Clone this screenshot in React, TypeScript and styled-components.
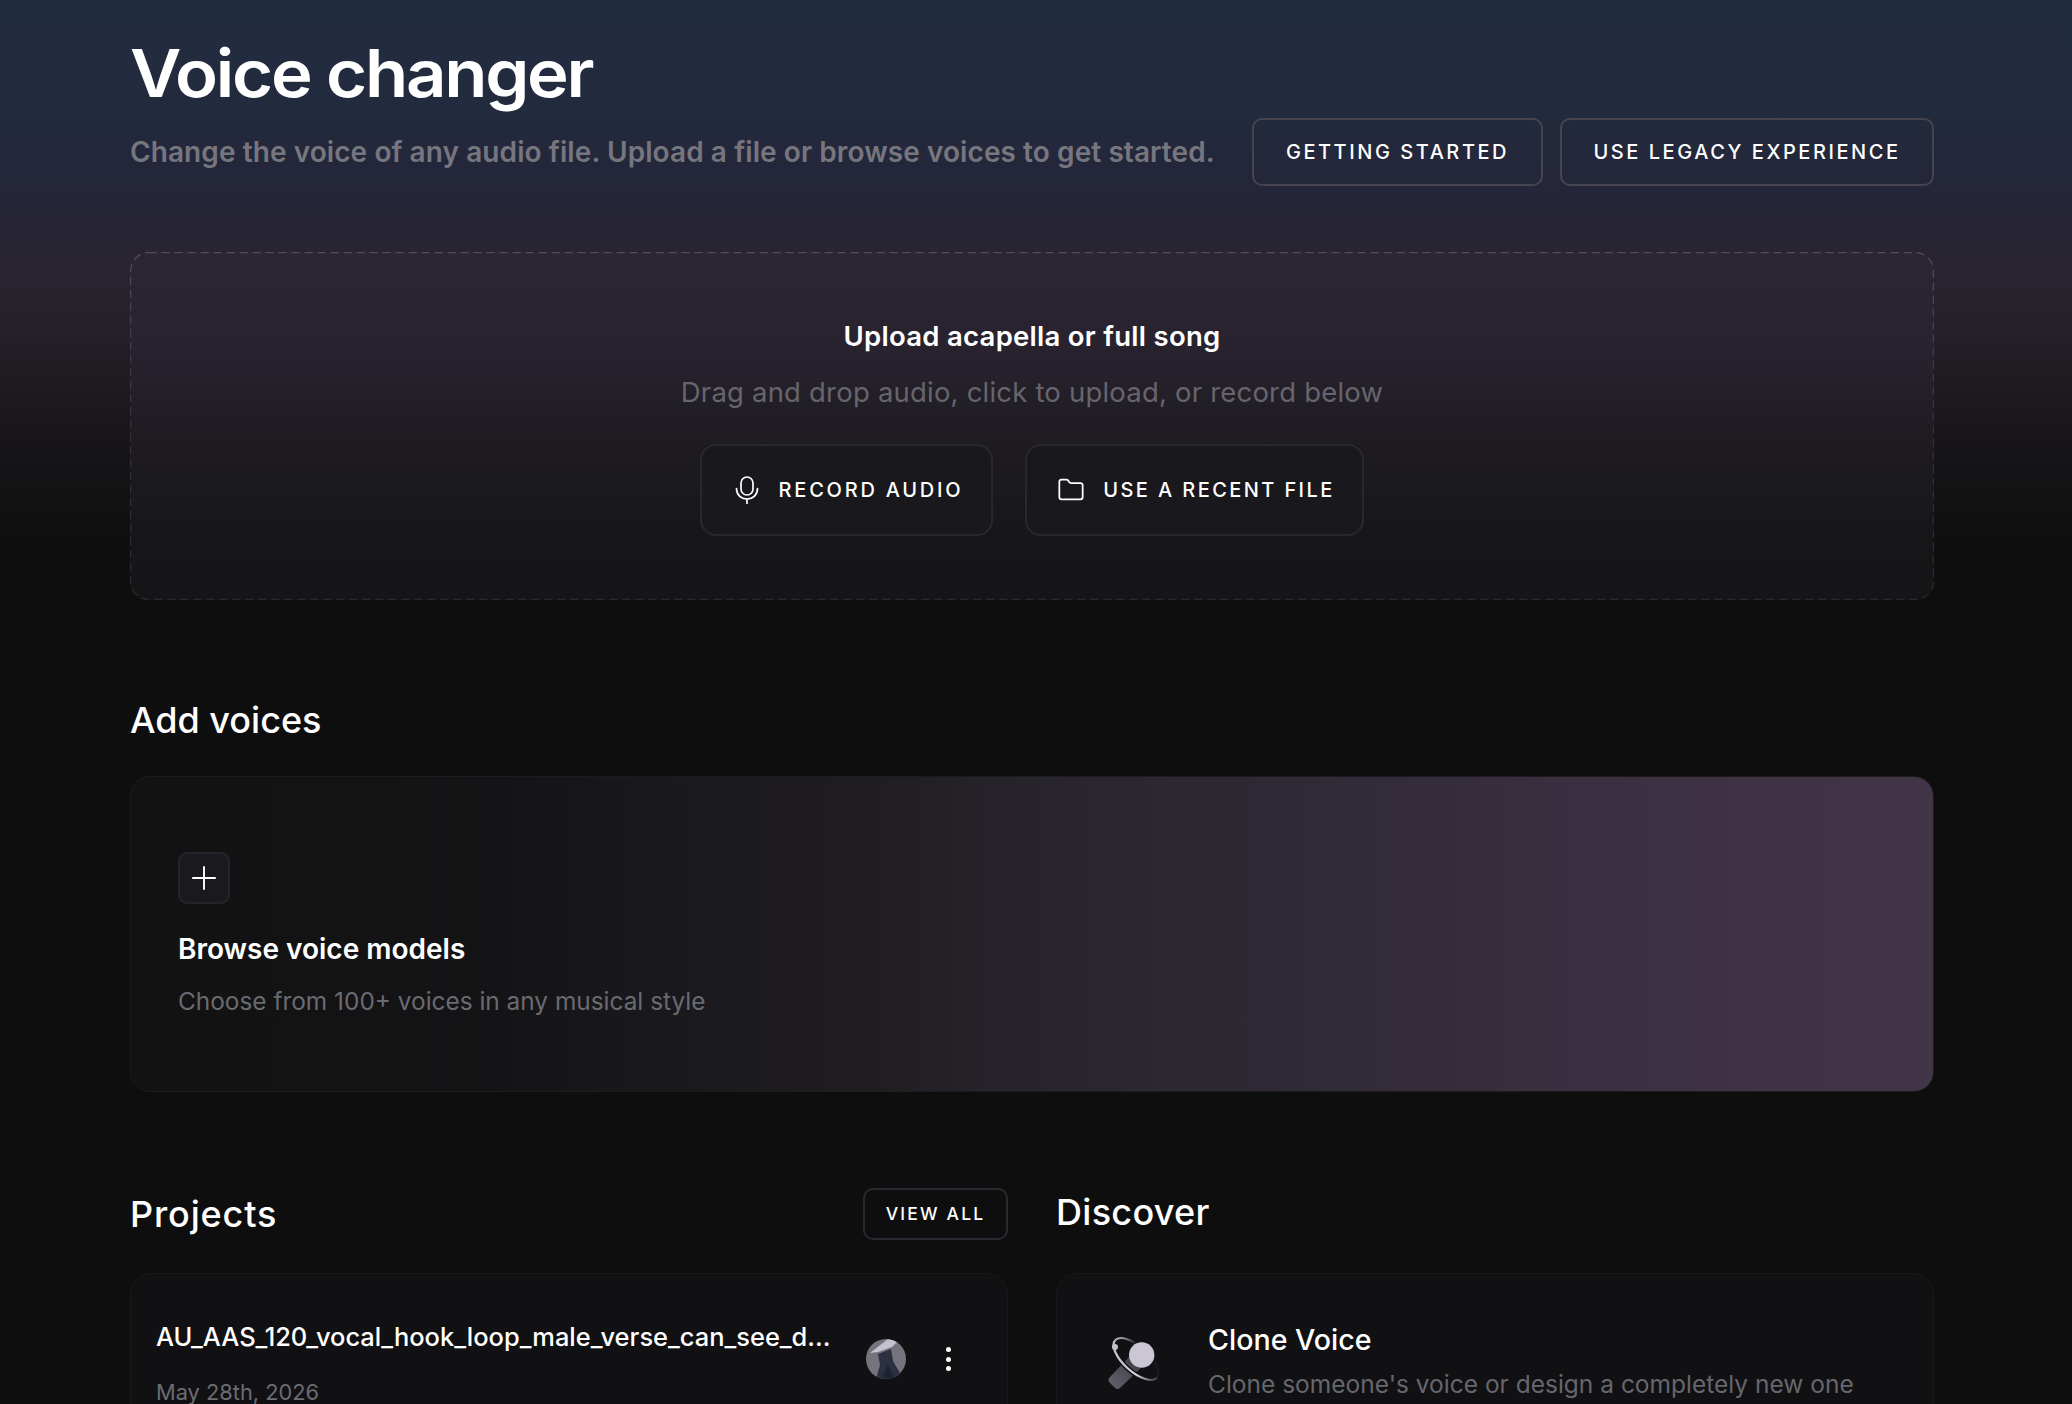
import React from "react";
import styled, { createGlobalStyle } from "styled-components";
import { Folder, Plus } from "lucide-react";

const Global = createGlobalStyle`
  html, body { margin: 0; padding: 0; height: 1404px; overflow: hidden; background: #0e0e0f; }
  #root { height: 1404px; overflow: hidden; }
  * { box-sizing: border-box; }
`;

const Page = styled.div`
  height: 1404px;
  padding: 0 138px 0 130px;
  font-family: Inter, "Liberation Sans", sans-serif;
  color: #fff;
  background: linear-gradient(
    180deg,
    #222c40 0px,
    #222b3e 100px,
    #24263a 180px,
    #29242f 270px,
    #25202a 330px,
    #211c22 366px,
    #1c181d 410px,
    #141315 470px,
    #0f0f10 540px,
    #0e0e0f 620px
  );
`;

const Title = styled.h1`
  margin: 0;
  padding-top: 37px;
  height: 110px;
  font-size: 66px;
  line-height: 72px;
  font-weight: 600;
  letter-spacing: -2.1px;
  transform: scaleX(1.07);
  transform-origin: left center;
`;

const HeaderRow = styled.div`
  display: flex;
  align-items: center;
  justify-content: space-between;
  margin-top: 8px;
`;

const Subtitle = styled.p`
  margin: 0;
  font-size: 28px;
  line-height: 40px;
  font-weight: 600;
  letter-spacing: 0.08px;
  color: #77767f;
`;

const HeaderActions = styled.div`
  display: flex;
  gap: 17px;
`;

const GhostButton = styled.button<{ $w: number; $h: number }>`
  display: inline-flex;
  align-items: center;
  justify-content: center;
  width: ${(p) => p.$w}px;
  height: ${(p) => p.$h}px;
  border: 2px solid #47434f;
  border-radius: 10px;
  background: transparent;
  color: #fff;
  font-family: inherit;
  font-size: 20px;
  font-weight: 500;
  letter-spacing: 2.55px;
  text-transform: uppercase;
`;

const Dropzone = styled.section`
  position: relative;
  margin-top: 66px;
  height: 348px;
  border-radius: 18px;
  background: linear-gradient(180deg, #2c2533 0%, #292330 25%, #1e1b21 55%, #17171a 80%, #151517 100%);
  display: flex;
  flex-direction: column;
  align-items: center;
  padding-top: 63.5px;
`;

const DashedEdge = styled.svg`
  position: absolute;
  inset: 0;
  width: 100%;
  height: 100%;
  pointer-events: none;
`;

const DashedRect = styled.rect`
  x: 0.6px;
  y: 0.6px;
  width: calc(100% - 1.2px);
  height: calc(100% - 1.2px);
  rx: 18px;
  ry: 18px;
  fill: none;
  stroke-width: 1.2;
  stroke-dasharray: 8 5;
`;

const DropTitle = styled.div`
  font-size: 27.5px;
  line-height: 40px;
  font-weight: 600;
  letter-spacing: 0.28px;
`;

const DropHint = styled.div`
  margin-top: 16px;
  font-size: 27.5px;
  line-height: 40px;
  letter-spacing: 0.2px;
  color: #66656c;
`;

const DropActions = styled.div`
  display: flex;
  gap: 32px;
  margin-top: 32px;
`;

const IconButton = styled.button<{ $w: number; $ls: number; $inset: number }>`
  display: inline-flex;
  align-items: center;
  justify-content: center;
  gap: 18px;
  width: ${(p) => p.$w}px;
  height: 92px;
  padding: 0 0 0 ${(p) => p.$inset}px;
  border: 2px solid #2b2731;
  border-radius: 16px;
  background: #19181c;
  color: #fff;
  font-family: inherit;
  font-size: 20px;
  font-weight: 500;
  letter-spacing: ${(p) => p.$ls}px;
  text-transform: uppercase;
`;

const MicGlyph = styled.svg`
  display: block;
  width: 24px;
  height: 28px;
  margin-right: 2px;
  flex: none;
  fill: none;
  stroke: #fff;
  stroke-width: 1.7;
  stroke-linecap: round;
`;

const SectionTitle = styled.h2`
  margin: 0;
  font-size: 36px;
  line-height: 46px;
  font-weight: 500;
`;

const AddVoices = styled.section`
  margin-top: 97px;
`;

const BrowseCard = styled.div`
  margin-top: 33px;
  height: 316px;
  border: 1px solid #1c1c1f;
  border-radius: 20px;
  padding: 75px 47px 0;
  background: linear-gradient(
    90deg,
    #121213 0%,
    #141416 20%,
    #211e24 43%,
    #26232a 48%,
    #2b2630 55%,
    #312a37 67%,
    #3a2f40 80%,
    #423548 100%
  );
`;

const PlusBox = styled.div`
  width: 52px;
  height: 52px;
  display: flex;
  align-items: center;
  justify-content: center;
  border: 2px solid #26232b;
  border-radius: 9px;
  background: #1a1a1e;
`;

const CardTitle = styled.div`
  margin-top: 27px;
  font-size: 28px;
  line-height: 36px;
  font-weight: 600;
`;

const CardHint = styled.div`
  margin-top: 16px;
  font-size: 24.4px;
  line-height: 36px;
  color: #6a6a71;
`;

const Columns = styled.div`
  display: grid;
  grid-template-columns: 878px 878px;
  justify-content: space-between;
  margin-top: 96px;
`;

const Column = styled.section``;

const ColumnHead = styled.div`
  display: flex;
  align-items: center;
  justify-content: space-between;
  height: 51px;
`;

const ProjectsTitle = styled(SectionTitle)`
  margin-top: 1px;
  letter-spacing: 0.85px;
`;

const RaisedTitle = styled(SectionTitle)`
  margin-top: -4px;
  letter-spacing: 0.3px;
`;

const SmallButton = styled.button`
  width: 145px;
  height: 52px;
  border: 2px solid #2b2731;
  border-radius: 10px;
  background: transparent;
  color: #fff;
  font-family: inherit;
  font-size: 17.5px;
  font-weight: 500;
  letter-spacing: 2.2px;
  text-transform: uppercase;
`;

const ListCard = styled.div`
  margin-top: 34px;
  height: 220px;
  border: 1px solid #18181a;
  border-radius: 20px;
  background: #111113;
`;

const ProjectBody = styled(ListCard)`
  display: flex;
  justify-content: space-between;
  padding: 45px 56px 0 25px;
`;

const FileName = styled.div`
  font-size: 25.45px;
  line-height: 36px;
  font-weight: 500;
  white-space: nowrap;
`;

const FileDate = styled.div`
  margin-top: 21px;
  font-size: 21.8px;
  line-height: 32px;
  color: #6c6c73;
`;

const RowTools = styled.div`
  display: flex;
  align-items: flex-start;
  gap: 40px;
  padding-top: 20px;
`;

const Avatar = styled.svg`
  display: block;
  width: 40px;
  height: 40px;
`;

const Dots = styled.div`
  display: flex;
  flex-direction: column;
  gap: 4.5px;
  padding-top: 8px;
`;

const Dot = styled.span`
  display: block;
  width: 5px;
  height: 5px;
  border-radius: 50%;
  background: #fff;
`;

const DiscoverBody = styled(ListCard)`
  display: flex;
  padding: 46px 0 0 48px;
  gap: 38px;
`;

const CloneIcon = styled.svg`
  display: block;
  width: 65px;
  height: 65px;
  margin-top: 12px;
  flex: none;
`;

const DiscoverTitle = styled.div`
  font-size: 28.6px;
  line-height: 40px;
  font-weight: 500;
`;

const DiscoverHint = styled.div`
  margin-top: 4px;
  font-size: 24.5px;
  line-height: 40px;
  color: #66666d;
  white-space: nowrap;
`;

export default function App() {
  return (
    <Page>
      <Global />
      <Title>Voice changer</Title>
      <HeaderRow>
        <Subtitle>Change the voice of any audio file. Upload a file or browse voices to get started.</Subtitle>
        <HeaderActions>
          <GhostButton $w={291} $h={68}>Getting started</GhostButton>
          <GhostButton $w={374} $h={68}>Use legacy experience</GhostButton>
        </HeaderActions>
      </HeaderRow>

      <Dropzone>
        <DashedEdge>
          <defs>
            <linearGradient id="dashFade" x1="0" y1="0" x2="0" y2="1">
              <stop offset="0" stopColor="#564b5c" />
              <stop offset="0.5" stopColor="#35313a" />
              <stop offset="1" stopColor="#2b292f" />
            </linearGradient>
          </defs>
          <DashedRect stroke="url(#dashFade)" />
        </DashedEdge>
        <DropTitle>Upload acapella or full song</DropTitle>
        <DropHint>Drag and drop audio, click to upload, or record below</DropHint>
        <DropActions>
          <IconButton $w={293} $ls={2.77} $inset={5}>
            <MicGlyph viewBox="0 0 24 28">
              <rect x="6" y="1" width="12" height="18" rx="6" />
              <path d="M1.5 12.5 C1.5 19 6 23 12 23 C18 23 22.5 19 22.5 12.5" />
              <path d="M12 23 V27.5" />
            </MicGlyph>
            Record audio
          </IconButton>
          <IconButton $w={339} $ls={2.4} $inset={3}>
            <Folder size={28} strokeWidth={1.5} />
            Use a recent file
          </IconButton>
        </DropActions>
      </Dropzone>

      <AddVoices>
        <SectionTitle>Add voices</SectionTitle>
        <BrowseCard>
          <PlusBox>
            <Plus size={38} strokeWidth={1.2} color="#fff" />
          </PlusBox>
          <CardTitle>Browse voice models</CardTitle>
          <CardHint>Choose from 100+ voices in any musical style</CardHint>
        </BrowseCard>
      </AddVoices>

      <Columns>
        <Column>
          <ColumnHead>
            <ProjectsTitle>Projects</ProjectsTitle>
            <SmallButton>View all</SmallButton>
          </ColumnHead>
          <ProjectBody>
            <div>
              <FileName>AU_AAS_120_vocal_hook_loop_male_verse_can_see_d...</FileName>
              <FileDate>May 28th, 2026</FileDate>
            </div>
            <RowTools>
              <Avatar viewBox="0 0 40 40">
                <defs>
                  <clipPath id="orb">
                    <circle cx="20" cy="20" r="20" />
                  </clipPath>
                </defs>
                <g clipPath="url(#orb)">
                  <rect width="40" height="40" fill="#74747f" />
                  <path d="M4 14 L22 0 L34 0 L26 8 L12 13 Z" fill="#c4c2cb" />
                  <path d="M12 15 L25 10 L27 22 L34 34 L30 40 L10 40 L14 26 Z" fill="#2c3040" />
                  <path d="M16 38 L22 26 L28 38 L24 40 Z" fill="#1f2230" />
                </g>
              </Avatar>
              <Dots>
                <Dot />
                <Dot />
                <Dot />
              </Dots>
            </RowTools>
          </ProjectBody>
        </Column>
        <Column>
          <ColumnHead>
            <RaisedTitle>Discover</RaisedTitle>
          </ColumnHead>
          <DiscoverBody>
            <CloneIcon viewBox="0 0 65 65">
              <defs>
                <linearGradient id="handle" x1="0" y1="1" x2="1" y2="0">
                  <stop offset="0" stopColor="#66626e" />
                  <stop offset="1" stopColor="#3a373f" />
                </linearGradient>
                <linearGradient id="orbitLow" gradientUnits="userSpaceOnUse" x1="-28" y1="0" x2="28" y2="0">
                  <stop offset="0" stopColor="#c5c0cc" />
                  <stop offset="0.72" stopColor="#d3cfda" />
                  <stop offset="1" stopColor="#46434c" />
                </linearGradient>
                <linearGradient id="orbitHigh" gradientUnits="userSpaceOnUse" x1="-28" y1="0" x2="-10" y2="0">
                  <stop offset="0" stopColor="#b9b4c1" />
                  <stop offset="1" stopColor="#1a191d" />
                </linearGradient>
              </defs>
              <path d="M24.5 24.5 L36 36 L15 56 Q12.5 58 10 56 L4.5 50.5 Q2.5 48 4.5 45.5 Z" fill="url(#handle)" />
              <g transform="translate(31 27) rotate(42)">
                <path d="M-28 0 A28 12.5 0 0 1 28 0" fill="none" stroke="url(#orbitHigh)" strokeWidth="2.2" />
                <path d="M-28 0 A28 12.5 0 0 0 28 0" fill="none" stroke="#111113" strokeWidth="5" />
                <path d="M-28 0 A28 12.5 0 0 0 28 0" fill="none" stroke="url(#orbitLow)" strokeWidth="2.2" />
              </g>
              <circle cx="36.7" cy="23" r="12.7" fill="#cbc6d4" />
              <circle cx="10" cy="15" r="3" fill="#c5c0cc" />
            </CloneIcon>
            <div>
              <DiscoverTitle>Clone Voice</DiscoverTitle>
              <DiscoverHint>Clone someone's voice or design a completely new one</DiscoverHint>
            </div>
          </DiscoverBody>
        </Column>
      </Columns>
    </Page>
  );
}
